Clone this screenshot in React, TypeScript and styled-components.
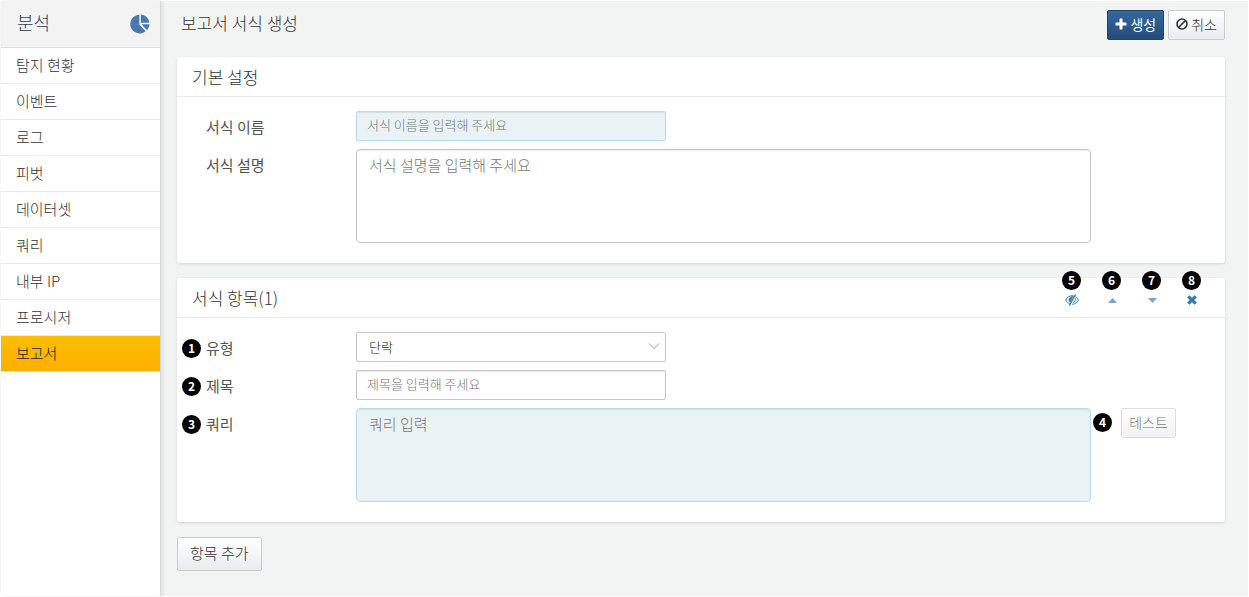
import React from "react";
import styled, { createGlobalStyle, css } from "styled-components";

const GlobalStyle = createGlobalStyle`
  *, *::before, *::after { box-sizing: border-box; }
  body {
    margin: 0;
    background: #fff;
    color: #333;
    font-family: "Noto Sans CJK KR", sans-serif;
    font-size: 15px;
    font-weight: 300;
    line-height: 20px;
  }
  button, input, select, textarea { font: inherit; color: inherit; }
`;

const Page = styled.div`
  display: flex;
  min-height: 100vh;
  padding: 1px;
`;

const Sidebar = styled.aside`
  flex: 0 0 160px;
  border-right: 1px solid #d9d9d9;
  background: #fff;
  box-shadow: 1px 0 5px rgba(0, 0, 0, 0.1);
  z-index: 1;
`;

const SidebarHeader = styled.header`
  display: flex;
  align-items: center;
  justify-content: space-between;
  height: 47px;
  padding: 0 10px 0 16px;
  border-bottom: 1px solid #ddd;
  background: #f3f3f3;
`;

const SidebarTitle = styled.h1`
  margin: 0;
  padding-bottom: 4px;
  color: #1f3e60;
  font-size: 18px;
  font-weight: 300;
  line-height: 24px;
`;

const Menu = styled.ul`
  margin: 0;
  padding: 0;
  list-style: none;
`;

const MenuLink = styled.a<{ $active?: boolean }>`
  display: block;
  height: 36px;
  padding: 7px 15px;
  border-bottom: 1px solid #e9e9e9;
  color: #333;
  text-decoration: none;
  ${({ $active }) =>
    $active &&
    css`
      background: linear-gradient(#fabf00, #ffae00);
      color: #222;
    `}
`;

const Main = styled.main`
  flex: 1;
  min-width: 0;
  padding: 9px 23px 24px 16px;
  background: #f2f4f4;
`;

const TopBar = styled.header`
  display: flex;
  align-items: center;
  justify-content: space-between;
  margin-bottom: 17px;
  padding-left: 4px;
`;

const PageTitle = styled.h2`
  margin: 0;
  padding-bottom: 4px;
  font-size: 17px;
  font-weight: 300;
  line-height: 26px;
`;

const ButtonGroup = styled.div`
  display: flex;
  gap: 4px;
`;

const Button = styled.button<{ $primary?: boolean; $large?: boolean }>`
  display: inline-flex;
  align-items: center;
  justify-content: center;
  gap: 3px;
  height: ${({ $large }) => ($large ? 34 : 30)}px;
  padding: 0 ${({ $large }) => ($large ? 12 : 7)}px 3px;
  border: 1px solid ${({ $primary }) => ($primary ? "#1f426b" : "#ccc")};
  border-radius: 2px;
  background: ${({ $primary }) =>
    $primary ? "linear-gradient(#37689f, #234b7b)" : "linear-gradient(#fff, #e9ecf0)"};
  color: ${({ $primary }) => ($primary ? "#fff" : "#333")};
  font-size: ${({ $large }) => ($large ? 15 : 14)}px;
  font-weight: ${({ $primary }) => ($primary ? 400 : 300)};
  white-space: nowrap;
  &:disabled { opacity: 0.65; }
`;

const TestButton = styled(Button)`
  width: 55px;
`;

const Panel = styled.section`
  margin-bottom: 15px;
  border-radius: 3px;
  background: #fff;
  box-shadow: 0 1px 3px rgba(0, 0, 0, 0.14);
`;

const PanelHeader = styled.header`
  display: flex;
  align-items: center;
  justify-content: space-between;
  height: 40px;
  padding: 0 13px 0 15px;
  border-bottom: 1px solid #e9e9e9;
`;

const PanelTitle = styled.h3`
  margin: 0;
  font-size: 17px;
  font-weight: 300;
  line-height: 24px;
`;

const Tools = styled.div`
  display: flex;
`;

const Tool = styled.button`
  position: relative;
  display: flex;
  align-items: center;
  justify-content: center;
  width: 40px;
  height: 20px;
  padding: 5px 0 0;
  border: 0;
  background: none;
  color: #337ab7;
`;

const Badge = styled.span`
  position: absolute;
  display: flex;
  align-items: center;
  justify-content: center;
  width: 19px;
  height: 19px;
  padding-bottom: 2px;
  border-radius: 50%;
  background: #000;
  color: #fff;
  font-size: 12px;
  font-weight: 700;
  line-height: 17px;
`;

const ToolBadge = styled(Badge)`
  left: 10px;
  bottom: 18px;
`;

const LabelBadge = styled(Badge)`
  top: 7px;
  left: -24px;
`;

const ActionBadge = styled(Badge)`
  top: 5px;
  left: 2px;
`;

const Form = styled.form`
  display: grid;
  gap: 8px;
  padding: 14px 0 20px 29px;
`;

const Row = styled.div`
  display: grid;
  grid-template-columns: 150px minmax(0, 1fr) 134px;
  align-items: start;
`;

const Label = styled.label`
  position: relative;
  padding-top: 6px;
  color: #555;
  font-weight: 400;
`;

const field = css<{ $required?: boolean }>`
  display: block;
  border: 1px solid ${({ $required }) => ($required ? "#b9dce8" : "#c5c5c5")};
  background: ${({ $required }) => ($required ? "#e9f2f5" : "#fff")};
  outline: 0;
  &::placeholder { color: #777; opacity: 1; }
`;

const TextInput = styled.input<{ $required?: boolean }>`
  ${field}
  width: 310px;
  height: 30px;
  padding: 0 10px 3px;
  border-radius: 2px;
  box-shadow: inset 0 1px 1px rgba(0, 0, 0, 0.08);
  font-size: 13px;
`;

const TextArea = styled.textarea<{ $required?: boolean }>`
  ${field}
  width: 100%;
  height: 94px;
  padding: 5px 12px;
  border-radius: 4px;
  box-shadow: inset 0 1px 1px rgba(0, 0, 0, 0.08);
  resize: none;
`;

const SelectBox = styled.div`
  position: relative;
  width: 310px;
`;

const Select = styled.select`
  ${field}
  width: 100%;
  height: 30px;
  padding: 0 12px;
  border-radius: 2px;
  color: #222;
  font-size: 13px;
  appearance: none;
`;

const SelectArrow = styled.svg`
  position: absolute;
  top: 10px;
  right: 6px;
  pointer-events: none;
`;

const Action = styled.div`
  position: relative;
  padding-left: 30px;
`;

const PieIcon = () => (
  <svg width="20" height="20" viewBox="0 0 20 20" fill="#4878b0" aria-hidden="true">
    <path d="M9.300 .8A9.300 9.300 0 1 0 15.600 17.200L9.300 10.600Z" />
    <path d="M10.800 .4A9 9 0 0 1 19.200 8.800H10.800Z" />
    <path d="M11.600 10.300H19.500A9.200 9.200 0 0 1 17 16.200Z" />
  </svg>
);

const PlusIcon = () => (
  <svg width="12" height="12" viewBox="0 0 12 12" fill="currentColor" aria-hidden="true">
    <path d="M5 .5h2q.5 0 .5.5v3.500H11q.5 0 .5.5v2q0 .5-.5.5H7.500V11q0 .5-.5.5H5q-.5 0-.5-.5V7.500H1q-.5 0-.5-.5V5q0-.5.5-.5h3.500V1q0-.5.5-.5Z" />
  </svg>
);

const BanIcon = () => (
  <svg width="12" height="12" viewBox="0 0 12 12" fill="none" stroke="currentColor" strokeWidth="1.600" aria-hidden="true">
    <circle cx="6" cy="6" r="5" />
    <path d="M2.500 9.500 9.500 2.500" />
  </svg>
);

const EyeOffIcon = () => (
  <svg width="14" height="12" viewBox="0 0 14 12" fill="none" stroke="currentColor" strokeLinecap="round" aria-hidden="true">
    <path d="M8 1.700C4.500 1.200 2 3.500.7 6c.9 1.700 2.200 3.100 3.900 3.800M10.800 2.700C12 3.600 12.800 4.800 13.400 6c-1.200 2.300-3.200 4.200-5.800 4.300" />
    <path d="M10.300.8 4.600 11.200" strokeWidth="1.300" />
    <path d="M8.200 2.200 5.100 8.200C3 6.600 3.400 2.900 8.200 2.200Z" fill="currentColor" strokeWidth=".6" />
    <path d="M10.200 4.500c.5 1.800-.3 3.300-1.900 3.900" />
  </svg>
);

const UpIcon = () => (
  <svg width="9" height="5" viewBox="0 0 9 5" fill="#77a6d0" aria-hidden="true">
    <path d="M0 5 4.500 0 9 5Z" />
  </svg>
);

const DownIcon = () => (
  <svg width="9" height="5" viewBox="0 0 9 5" fill="#77a6d0" aria-hidden="true">
    <path d="M0 0 4.500 5 9 0Z" />
  </svg>
);

const RemoveIcon = () => (
  <svg width="10" height="10" viewBox="0 0 10 10" stroke="currentColor" strokeWidth="3.200" aria-hidden="true">
    <path d="M1.300 1.300 8.700 8.700M8.700 1.300 1.300 8.700" />
  </svg>
);

const menu = ["탐지 현황", "이벤트", "로그", "피벗", "데이터셋", "쿼리", "내부 IP", "프로시저", "보고서"];

const tools = [
  { label: "숨기기", badge: 5, Icon: EyeOffIcon },
  { label: "위로", badge: 6, Icon: UpIcon },
  { label: "아래로", badge: 7, Icon: DownIcon },
  { label: "삭제", badge: 8, Icon: RemoveIcon },
];

export default function App() {
  return (
    <>
      <GlobalStyle />
      <Page>
        <Sidebar>
          <SidebarHeader>
            <SidebarTitle>분석</SidebarTitle>
            <PieIcon />
          </SidebarHeader>
          <nav>
            <Menu>
              {menu.map((name) => (
                <li key={name}>
                  <MenuLink href="#" $active={name === "보고서"}>{name}</MenuLink>
                </li>
              ))}
            </Menu>
          </nav>
        </Sidebar>
        <Main>
          <TopBar>
            <PageTitle>보고서 서식 생성</PageTitle>
            <ButtonGroup>
              <Button type="button" $primary><PlusIcon />생성</Button>
              <Button type="button"><BanIcon />취소</Button>
            </ButtonGroup>
          </TopBar>

          <Panel>
            <PanelHeader>
              <PanelTitle>기본 설정</PanelTitle>
            </PanelHeader>
            <Form>
              <Row>
                <Label htmlFor="name">서식 이름</Label>
                <TextInput id="name" $required placeholder="서식 이름을 입력해 주세요" />
              </Row>
              <Row>
                <Label htmlFor="description">서식 설명</Label>
                <TextArea id="description" placeholder="서식 설명을 입력해 주세요" />
              </Row>
            </Form>
          </Panel>

          <Panel>
            <PanelHeader>
              <PanelTitle>서식 항목(1)</PanelTitle>
              <Tools>
                {tools.map(({ label, badge, Icon }) => (
                  <Tool key={badge} type="button" aria-label={label}>
                    <ToolBadge>{badge}</ToolBadge>
                    <Icon />
                  </Tool>
                ))}
              </Tools>
            </PanelHeader>
            <Form>
              <Row>
                <Label htmlFor="type"><LabelBadge>1</LabelBadge>유형</Label>
                <SelectBox>
                  <Select id="type">
                    <option>단락</option>
                  </Select>
                  <SelectArrow width="12" height="8" viewBox="0 0 12 8" fill="none" stroke="#999">
                    <path d="M1 1.500 6 6.500 11 1.500" />
                  </SelectArrow>
                </SelectBox>
              </Row>
              <Row>
                <Label htmlFor="title"><LabelBadge>2</LabelBadge>제목</Label>
                <TextInput id="title" placeholder="제목을 입력해 주세요" />
              </Row>
              <Row>
                <Label htmlFor="query"><LabelBadge>3</LabelBadge>쿼리</Label>
                <TextArea id="query" $required placeholder="쿼리 입력" />
                <Action>
                  <ActionBadge>4</ActionBadge>
                  <TestButton type="button" disabled>테스트</TestButton>
                </Action>
              </Row>
            </Form>
          </Panel>

          <Button type="button" $large>항목 추가</Button>
        </Main>
      </Page>
    </>
  );
}
